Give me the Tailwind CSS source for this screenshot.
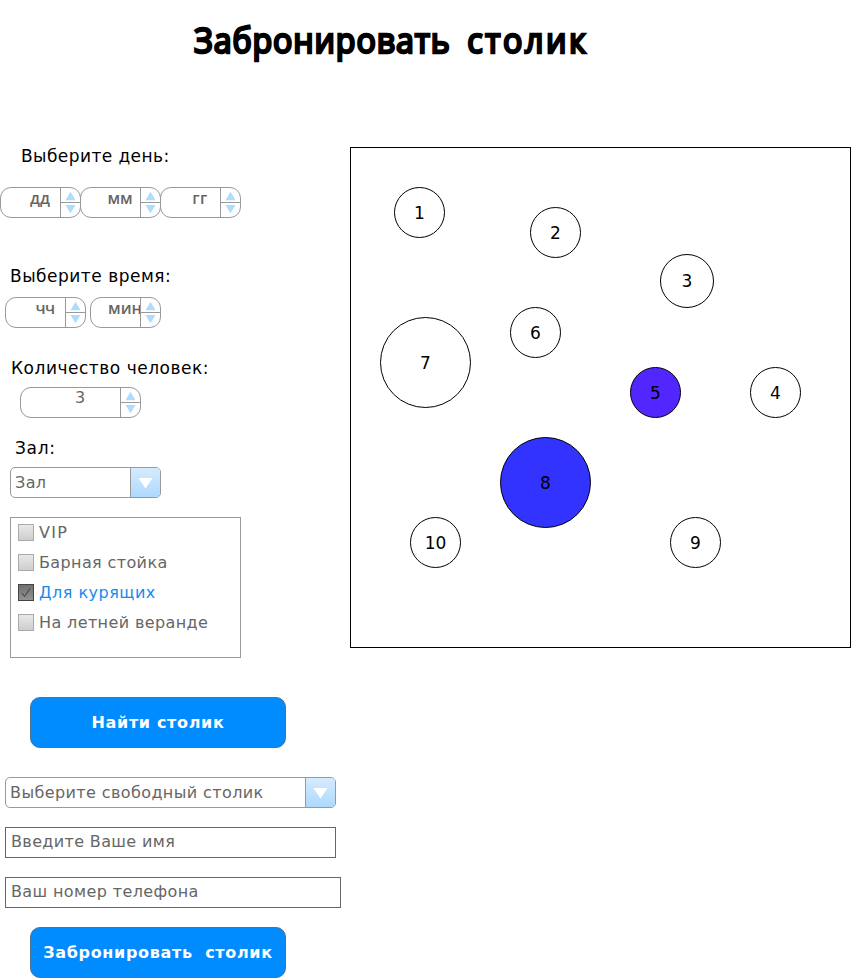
<!DOCTYPE html>
<html lang="ru">
<head>
<meta charset="utf-8">
<title>Забронировать столик</title>
<script src="https://cdn.jsdelivr.net/npm/@tailwindcss/browser@4"></script>
</head>
<body class="bg-white text-black font-['DejaVu_Sans',sans-serif] text-[17px] leading-5 w-[851px] h-[978px] overflow-hidden">
<svg class="hidden">
  <symbol id="steps" viewBox="0 0 19 29"><path d="M0 14.5H19" stroke="#999"/><path d="M4.5 12.2L9.5 3.8L14.5 12.2ZM4.5 17L9.5 25.2L14.5 17Z" fill="#addcfd"/></symbol>
  <symbol id="drop" viewBox="0 0 29 29"><path d="M7.5 10H21.5L14.5 20.5Z" fill="#fff"/></symbol>
</svg>
<header class="h-[147px] pt-[16px] pl-[194px] whitespace-nowrap">
  <h1 class="flex gap-[18px] origin-left scale-x-[.92] font-['Open_Sans',sans-serif] font-normal text-[35px] leading-[48px] [-webkit-text-stroke:2.6px_#000] [stroke-linejoin:round]"><span class="tracking-[0.95px]">Забронировать</span> <span class="tracking-[2.8px]">столик</span></h1>
</header>
<main class="flex">
  <form class="w-[350px] shrink-0 flex flex-col items-start whitespace-nowrap">
    <p class="ml-[21px] -mt-px h-[41px] tracking-[0.42px]">Выберите день:</p>
    <div class="flex h-[31px]">
      <div class="flex w-[81px] -mr-px border border-[#999] rounded-[11px] overflow-hidden"><span class="w-[59px] pl-[19px] text-center text-[16px] font-semibold font-['Open_Sans'] text-[#666]">дд</span><svg class="w-[19px] h-[29px] border-l border-[#999] box-content"><use href="#steps"/></svg></div>
      <div class="flex w-[81px] -mr-px border border-[#999] rounded-[11px] overflow-hidden"><span class="w-[59px] pl-[19px] text-center text-[16px] font-semibold font-['Open_Sans'] text-[#666]">мм</span><svg class="w-[19px] h-[29px] border-l border-[#999] box-content"><use href="#steps"/></svg></div>
      <div class="flex w-[81px] border border-[#999] rounded-[11px] overflow-hidden"><span class="w-[59px] pl-[19px] text-center text-[16px] tracking-[0.4px] font-semibold font-['Open_Sans'] text-[#666]">гг</span><svg class="w-[19px] h-[29px] border-l border-[#999] box-content"><use href="#steps"/></svg></div>
    </div>
    <p class="ml-[10px] mt-[48px] h-[31px] tracking-[0.5px]">Выберите время:</p>
    <div class="flex h-[31px] ml-[5px] gap-1">
      <div class="flex w-[81px] border border-[#999] rounded-[11px] overflow-hidden"><span class="w-[59px] pl-[19px] text-center text-[16px] tracking-[-0.5px] font-semibold font-['Open_Sans'] text-[#666]">чч</span><svg class="w-[19px] h-[29px] border-l border-[#999] box-content"><use href="#steps"/></svg></div>
      <div class="flex w-[71px] border border-[#999] rounded-[11px] overflow-hidden"><span class="w-[49px] pl-[17px] overflow-hidden text-[16px] font-semibold font-['Open_Sans'] text-[#666]">мин</span><svg class="w-[19px] h-[29px] border-l border-[#999] box-content"><use href="#steps"/></svg></div>
    </div>
    <p class="ml-[11px] mt-[30px] h-[29px] tracking-[0.52px]">Количество человек:</p>
    <div class="flex w-[121px] h-[31px] ml-[20px] border border-[#999] rounded-[11px] overflow-hidden"><span class="w-[99px] pl-[19px] text-center text-[16px] text-[#666]">3</span><svg class="w-[19px] h-[29px] border-l border-[#999] box-content"><use href="#steps"/></svg></div>
    <p class="ml-[15px] mt-[20px] h-[29px] tracking-[0.7px]">Зал:</p>
    <div class="flex w-[151px] h-[31px] ml-[10px] border border-[#999] rounded-[5px] overflow-hidden"><span class="w-[119px] pl-1 leading-[29px] text-[16px] tracking-[0.4px] text-[#666]">Зал</span><svg class="w-[29px] h-[29px] border-l border-[#999] box-content bg-linear-to-b from-[#d5ebff] to-[#add9fd]"><use href="#drop"/></svg></div>
    <div class="w-[231px] h-[141px] ml-[10px] mt-[19px] border border-[#999] pl-[7px] text-[16px] leading-[30px] tracking-[0.38px] text-[#666]">
      <div class="flex h-[30px]"><i class="w-4 h-[17px] mt-[6px] mr-[5px] border border-[#aaa] bg-linear-to-b from-[#e8e8e8] to-[#cecece]"></i><span class="tracking-[1.3px]">VIP</span></div>
      <div class="flex h-[30px]"><i class="w-4 h-[17px] mt-[6px] mr-[5px] border border-[#aaa] bg-linear-to-b from-[#e8e8e8] to-[#cecece]"></i><span>Барная стойка</span></div>
      <div class="flex h-[30px] text-[#168bee]"><i class="w-4 h-[17px] mt-[6px] mr-[5px] border border-[#444] bg-linear-to-b from-[#707070] to-[#929292]"><svg class="w-[14px] h-[15px]" viewBox="0 0 14 15"><path d="M3 8L5.5 11.5L11 3.5" fill="none" stroke="#3a3a3a"/></svg></i><span class="tracking-[0.5px]">Для курящих</span></div>
      <div class="flex h-[30px]"><i class="w-4 h-[17px] mt-[6px] mr-[5px] border border-[#aaa] bg-linear-to-b from-[#e8e8e8] to-[#cecece]"></i><span>На летней веранде</span></div>
    </div>
    <button type="button" class="w-[256px] h-[51px] ml-[30px] mt-[39px] border border-[#4d7396] rounded-[10px] bg-[#008bff] text-white text-[16px] tracking-[0.67px] font-bold">Найти столик</button>
    <div class="flex w-[331px] h-[31px] ml-[5px] mt-[29px] border border-[#999] rounded-[5px] overflow-hidden"><span class="w-[299px] pl-1 leading-[29px] text-[16px] tracking-[0.4px] text-[#666]">Выберите свободный столик</span><svg class="w-[29px] h-[29px] border-l border-[#999] box-content bg-linear-to-b from-[#d5ebff] to-[#add9fd]"><use href="#drop"/></svg></div>
    <div class="w-[331px] h-[31px] ml-[5px] mt-[19px] border border-[#666] pl-[5px] leading-[27px] text-[16px] tracking-[0.36px] text-[#666]">Введите Ваше имя</div>
    <div class="w-[336px] h-[31px] ml-[5px] mt-[19px] border border-[#666] pl-[5px] leading-[27px] text-[16px] tracking-[0.38px] text-[#666]">Ваш номер телефона</div>
    <button type="button" class="w-[256px] h-[51px] ml-[30px] mt-[19px] border border-[#4d7396] rounded-[10px] bg-[#008bff] text-white text-[16px] tracking-[0.67px] font-bold whitespace-pre">Забронировать  столик</button>
  </form>
  <section class="relative w-[501px] h-[501px] border border-black shrink-0">
    <div class="absolute left-[43px] top-[39px] size-[51px] rounded-full border border-black flex items-center justify-center">1</div>
    <div class="absolute left-[179px] top-[59px] size-[51px] rounded-full border border-black flex items-center justify-center">2</div>
    <div class="absolute left-[309px] top-[106px] size-[54px] rounded-full border border-black flex items-center justify-center">3</div>
    <div class="absolute left-[399px] top-[219px] size-[51px] rounded-full border border-black flex items-center justify-center">4</div>
    <div class="absolute left-[279px] top-[219px] size-[51px] rounded-full border border-black bg-[#5126ff] flex items-center justify-center">5</div>
    <div class="absolute left-[159px] top-[159px] size-[51px] rounded-full border border-black flex items-center justify-center">6</div>
    <div class="absolute left-[29px] top-[169px] size-[91px] rounded-full border border-black flex items-center justify-center">7</div>
    <div class="absolute left-[149px] top-[289px] size-[91px] rounded-full border border-black bg-[#3333ff] flex items-center justify-center">8</div>
    <div class="absolute left-[319px] top-[369px] size-[51px] rounded-full border border-black flex items-center justify-center">9</div>
    <div class="absolute left-[59px] top-[369px] size-[51px] rounded-full border border-black flex items-center justify-center">10</div>
  </section>
</main>
</body>
</html>
